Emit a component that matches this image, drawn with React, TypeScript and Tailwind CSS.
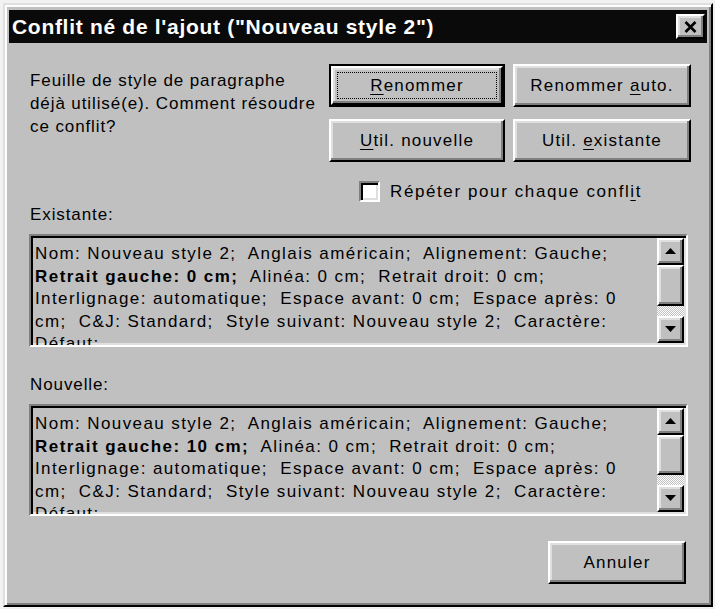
import React from "react";

const raised =
  "border-2 border-t-white border-l-white border-r-black border-b-black shadow-[inset_-2px_-2px_0_#808080,inset_2px_2px_0_#dfdfdf]";
const sunken =
  "border-2 border-t-[#808080] border-l-[#808080] border-r-white border-b-white shadow-[inset_2px_2px_0_#000,inset_-2px_-2px_0_#dfdfdf]";

const font = { fontFamily: '"Liberation Sans", Arial, sans-serif' } as const;

function Btn({
  children,
  isDefault,
  className = "",
}: {
  children: React.ReactNode;
  isDefault?: boolean;
  className?: string;
}) {
  if (isDefault) {
    return (
      <div className={`border-2 border-black ${className}`}>
        <div className={`${raised} h-full w-full p-[4px] bg-[#c0c0c0]`}>
          <div className="h-full w-full border border-dotted border-black flex items-center justify-center text-[17px] tracking-[1.2px] text-black">
            {children}
          </div>
        </div>
      </div>
    );
  }
  return (
    <div
      className={`${raised} bg-[#c0c0c0] flex items-center justify-center text-[17px] tracking-[1.2px] text-black ${className}`}
    >
      {children}
    </div>
  );
}

function ArrowBtn({ up }: { up?: boolean }) {
  return (
    <div className={`${raised} h-[27px] w-full bg-[#c0c0c0] flex items-center justify-center shrink-0`}>
      <svg width="11" height="7" viewBox="0 0 11 7">
        {up ? <polygon points="5.5,0 11,6 0,6" fill="#000" /> : <polygon points="0,0 11,0 5.5,6" fill="#000" />}
      </svg>
    </div>
  );
}

function ListBox({ bold, h, thumb }: { bold: string; h: string; thumb: string }) {
  return (
    <div className={`${sunken} ${h} w-[659px] -ml-[1px] bg-[#c0c0c0] flex`}>
      <div className="flex-1 overflow-hidden pl-[4px] pt-[7px] text-[17px] leading-[22.5px] tracking-[1.4px] text-black whitespace-pre">
        <div>Nom: Nouveau style 2;  Anglais américain;  Alignement: Gauche;</div>
        <div>
          <span className="font-bold tracking-[1.45px]">{bold}</span>
          <span>  Alinéa: 0 cm;  Retrait droit: 0 cm;</span>
        </div>
        <div>Interlignage: automatique;  Espace avant: 0 cm;  Espace après: 0</div>
        <div>cm;  C&amp;J: Standard;  Style suivant: Nouveau style 2;  Caractère:</div>
        <div>Défaut;</div>
      </div>
      <div className="w-[27px] flex flex-col mt-[2px] mb-[2px] mr-[2px]">
        <ArrowBtn up />
        <div className={`${raised} ${thumb} w-full bg-[#c0c0c0] shrink-0`} />
        <div className="flex-1 bg-[repeating-conic-gradient(#ffffff_0_25%,#c0c0c0_0_50%)] bg-[length:2px_2px]" />
        <ArrowBtn />
      </div>
    </div>
  );
}

export default function App() {
  return (
    <div className="w-[715px] h-[609px] bg-[#f2f2f2] pt-[3px] pl-[3px] overflow-hidden" style={font}>
      <div className="w-[710px] h-[604px] bg-[#c0c0c0] border-2 border-t-[#dfdfdf] border-l-[#dfdfdf] border-r-black border-b-black shadow-[inset_2px_2px_0_#fff,inset_-2px_-2px_0_#808080] p-[4px] flex flex-col">
        {/* title bar */}
        <div className="h-[33px] mt-[1px] bg-[#0a0a0a] flex items-center justify-between pl-[3px] pr-[2px] shrink-0">
          <span className="text-white font-bold text-[21px] tracking-[0.7px] leading-none">
            Conflit né de l'ajout ("Nouveau style 2")
          </span>
          <div className={`${raised} w-[29px] h-[25px] bg-[#c0c0c0] flex items-center justify-center`}>
            <svg width="13" height="12" viewBox="0 0 13 12">
              <path d="M1.5 1 L11.5 11 M11.5 1 L1.5 11" stroke="#000" strokeWidth="2.6" />
            </svg>
          </div>
        </div>

        {/* body */}
        <div className="flex flex-col pl-[21px] pr-[15px]">
          <div className="flex mt-[21px]">
            <div className="w-[299px] pt-[5px] text-[17px] leading-[23px] tracking-[0.9px] text-black">
              <div>Feuille de style de paragraphe</div>
              <div>déjà utilisé(e). Comment résoudre</div>
              <div>ce conflit?</div>
            </div>
            <div className="flex flex-col">
              <div className="grid grid-cols-[176px_178px] grid-rows-[43px_43px] gap-x-[8px] gap-y-[12px]">
                <Btn isDefault>
                  <span>
                    <span className="underline underline-offset-[3px]">R</span>enommer
                  </span>
                </Btn>
                <Btn>
                  <span>
                    Renommer <span className="underline underline-offset-[3px]">a</span>uto.
                  </span>
                </Btn>
                <Btn>
                  <span>
                    <span className="underline underline-offset-[3px]">U</span>til. nouvelle
                  </span>
                </Btn>
                <Btn>
                  <span>
                    Util. <span className="underline underline-offset-[3px]">e</span>xistante
                  </span>
                </Btn>
              </div>
              <div className="flex items-center mt-[19px] ml-[30px] h-[21px]">
                <div className={`${sunken} w-[21px] h-[21px] bg-white shrink-0`} />
                <span className="ml-[10px] text-[17px] tracking-[1.6px] text-black">
                  Répéter pour chaque confl<span className="underline underline-offset-[3px]">i</span>t
                </span>
              </div>
            </div>
          </div>

          <div className="mt-[2px] leading-[22px] text-[17px] tracking-[0.9px] text-black">Existante:</div>
          <div className="mt-[8px]">
            <ListBox bold="Retrait gauche: 0 cm;" h="h-[113px]" thumb="h-[41px]" />
          </div>

          <div className="mt-[27px] leading-[22px] text-[17px] tracking-[0.9px] text-black">Nouvelle:</div>
          <div className="mt-[8px]">
            <ListBox bold="Retrait gauche: 10 cm;" h="h-[112px]" thumb="h-[40px]" />
          </div>

          <div className="flex justify-end mt-[25px] pr-[6px]">
            <Btn className="w-[138px] h-[43px]">Annuler</Btn>
          </div>
        </div>
      </div>
    </div>
  );
}
